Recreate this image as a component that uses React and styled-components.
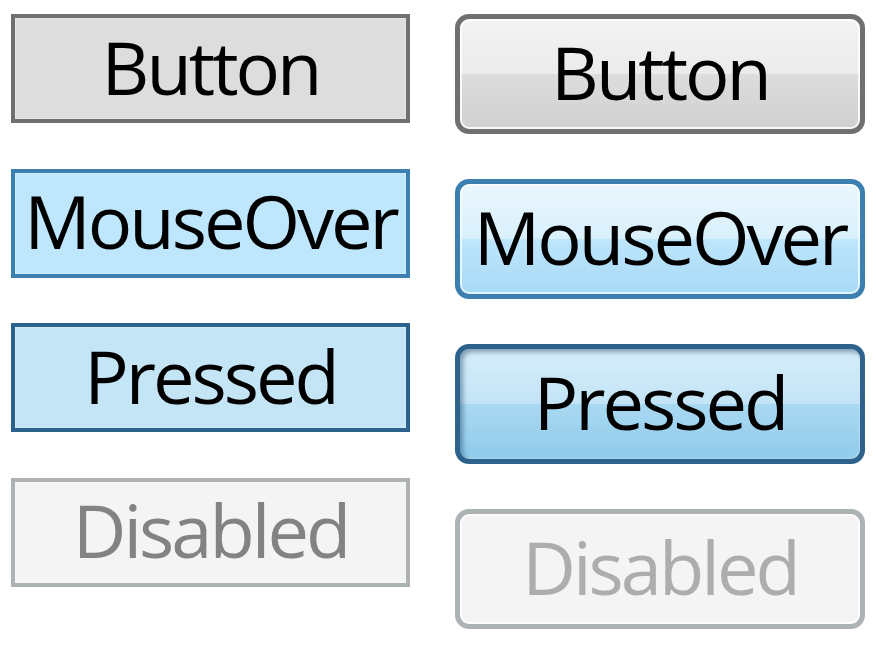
import styled, { createGlobalStyle, css } from "styled-components";

const GlobalStyle = createGlobalStyle`
  html, body {
    margin: 0;
    padding: 0;
    background: #ffffff;
  }
  body {
    font-family: "Open Sans", "Noto Sans", sans-serif;
  }
`;

// couleurs des etats, style "classic" (plat) et style "aero" (degrade)
const flat = {
  normal: { border: "#707070", bg: "#dddddd", color: "#000000" },
  over: { border: "#3c7fb1", bg: "#bee6fd", color: "#000000" },
  pressed: { border: "#2c628b", bg: "#c4e5f6", color: "#000000" },
  disabled: { border: "#adb2b5", bg: "#f4f4f4", color: "#838383" },
};

const aero = {
  normal: {
    border: "#707070",
    bg: "linear-gradient(#f3f3f3 0%, #ebebeb 50%, #dddddd 50%, #d0d0d0 100%)",
    color: "#000000",
    shadow: "inset 0 0 0 2px rgba(255,255,255,0.85)",
  },
  over: {
    border: "#3c7fb1",
    bg: "linear-gradient(#eaf6fd 0%, #d9f0fc 50%, #bee6fd 50%, #a7d9f5 100%)",
    color: "#000000",
    shadow: "inset 0 0 0 2px rgba(255,255,255,0.7)",
  },
  pressed: {
    border: "#2c628b",
    bg: "linear-gradient(#d6edfa 0%, #c2e4f6 50%, #a9d9f2 50%, #90cbeb 100%)",
    color: "#000000",
    shadow:
      "inset 3px 3px 5px rgba(20,60,90,0.45), inset -1px -1px 2px rgba(255,255,255,0.4)",
  },
  disabled: {
    border: "#adb2b5",
    bg: "#f4f4f4",
    color: "#adadad",
    shadow: "inset 0 0 0 2px rgba(255,255,255,0.9)",
  },
};

const Page = styled.div`
  display: flex;
  align-items: flex-start;
  gap: 45px;
  padding: 14px 0 0 11px;
`;

const Column = styled.div`
  display: flex;
  flex-direction: column;
  gap: ${(p) => p.$gap}px;
`;

const baseButton = css`
  box-sizing: border-box;
  display: flex;
  align-items: center;
  justify-content: center;
  border-style: solid;
  font-family: "Open Sans", "Noto Sans", sans-serif;
  font-size: 74px;
  letter-spacing: -3px;
  white-space: nowrap;
  overflow: visible;
  padding: 0;
  cursor: default;
`;

const FlatButton = styled.div`
  ${baseButton}
  width: 399px;
  height: 109px;
  border-width: 4px;
  border-color: ${(p) => flat[p.$state].border};
  background: ${(p) => flat[p.$state].bg};
  color: ${(p) => flat[p.$state].color};
  box-shadow: inset 0 0 0 1px rgba(255, 255, 255, 0.25);
`;

const AeroButton = styled.div`
  ${baseButton}
  width: 410px;
  height: 120px;
  border-width: 5px;
  border-radius: 14px;
  border-color: ${(p) => aero[p.$state].border};
  background: ${(p) => aero[p.$state].bg};
  color: ${(p) => aero[p.$state].color};
  box-shadow: ${(p) => aero[p.$state].shadow};
`;

const Label = styled.span`
  display: block;
  line-height: 1;
  margin-top: -4px;
`;

const states = [
  { key: "normal", text: "Button" },
  { key: "over", text: "MouseOver" },
  { key: "pressed", text: "Pressed" },
  { key: "disabled", text: "Disabled" },
];

export default function App() {
  return (
    <>
      <GlobalStyle />
      <Page>
        <Column $gap={45.5}>
          {states.map((s) => (
            <FlatButton key={s.key} $state={s.key}>
              <Label>{s.text}</Label>
            </FlatButton>
          ))}
        </Column>
        <Column $gap={45}>
          {states.map((s) => (
            <AeroButton key={s.key} $state={s.key}>
              <Label>{s.text}</Label>
            </AeroButton>
          ))}
        </Column>
      </Page>
    </>
  );
}
